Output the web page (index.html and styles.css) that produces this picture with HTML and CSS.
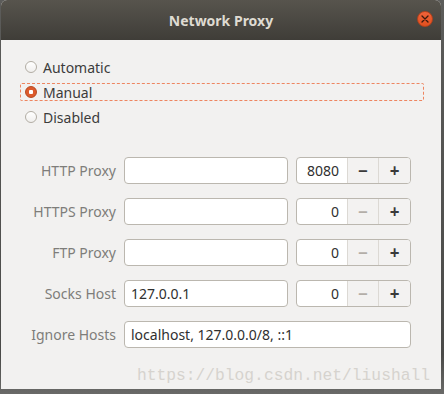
FILE: index.html
```html
<!DOCTYPE html>
<html>
<head>
<title>Network Proxy</title>
<link rel="stylesheet" href="styles.css">
</head>
<body>
    <div class="window">
        <div class="titlebar">
            <span class="title">Network Proxy</span>
            <span class="close">
                <svg width="8" height="8" viewBox="0 0 8 8"><path d="M1 1L7 7M7 1L1 7" stroke="#3a1a0e" stroke-width="1.3" stroke-linecap="round"/></svg>
            </span>
        </div>
        <div class="content">
            <div class="modes">
                <div class="mode"><span class="radio"></span>Automatic</div>
                <div class="mode focus"><span class="radio on"></span>Manual</div>
                <div class="mode"><span class="radio"></span>Disabled</div>
            </div>

            <div class="form">
                <label>HTTP Proxy</label>
                <div class="entry"></div>
                <div class="spin">
                    <span class="val">8080</span>
                    <span class="btn">&minus;</span>
                    <span class="btn">+</span>
                </div>

                <label>HTTPS Proxy</label>
                <div class="entry"></div>
                <div class="spin">
                    <span class="val">0</span>
                    <span class="btn off">&minus;</span>
                    <span class="btn">+</span>
                </div>

                <label>FTP Proxy</label>
                <div class="entry"></div>
                <div class="spin">
                    <span class="val">0</span>
                    <span class="btn off">&minus;</span>
                    <span class="btn">+</span>
                </div>

                <label>Socks Host</label>
                <div class="entry">127.0.0.1</div>
                <div class="spin">
                    <span class="val">0</span>
                    <span class="btn off">&minus;</span>
                    <span class="btn">+</span>
                </div>

                <label>Ignore Hosts</label>
                <div class="entry wide">localhost, 127.0.0.0/8, ::1</div>
            </div>

            <div class="mark">https://blog.csdn.net/liushall</div>
        </div>
    </div>
</body>
</html>
```

FILE: styles.css
```css
body {
    margin: 0;
    background: linear-gradient(#5c5c5a, #4a4a48 90%, #6a6a68);
    font: 14px "Noto Sans", sans-serif;
    height: 394px;
    overflow: hidden;
}
.window {
    margin-left: 1px;
    width: 440px;
    height: 389px;
    background-color: #f2f1f0;
    border-radius: 6px 6px 0 0;
    overflow: hidden;
}
.titlebar {
    height: 40px;
    background: linear-gradient(#57544d, #3f3d38);
    display: flex;
    align-items: center;
    justify-content: center;
    position: relative;
}
.title {
    color: #dfdbd2;
    font-weight: bold;
    font-size: 14px;
}
.close {
    position: absolute;
    right: 8px;
    top: 11px;
    width: 16px;
    height: 16px;
    box-sizing: border-box;
    border-radius: 50%;
    background: linear-gradient(#f0633a, #e0501f);
    border: 1px solid #b5421c;
    display: flex;
    align-items: center;
    justify-content: center;
}
.content {
    padding: 18px 17px 0 19px;
}
.modes {
    display: flex;
    flex-direction: column;
    gap: 7px;
}
.mode {
    height: 18px;
    box-sizing: border-box;
    border: 1px solid transparent;
    display: flex;
    align-items: center;
    gap: 6px;
    padding-left: 4px;
    color: #3c3c3c;
}
.mode.focus {
    border: 1px dashed #ee8560;
    border-radius: 2px;
}
.radio {
    width: 12px;
    height: 12px;
    box-sizing: border-box;
    border-radius: 50%;
    border: 1px solid #b2ada4;
    background: linear-gradient(#ffffff, #f0efed);
}
.radio.on {
    border-color: #b5471f;
    background: radial-gradient(circle, #ffffff 0 2px, #dc5a2c 2.5px);
}
.form {
    margin-top: 31px;
    display: grid;
    grid-template-columns: 96px 164px 115px;
    grid-auto-rows: 27px;
    column-gap: 8px;
    row-gap: 14px;
    align-items: center;
}
.form label {
    text-align: right;
    color: #7e7d7a;
}
.entry {
    height: 27px;
    box-sizing: border-box;
    border: 1px solid #bbb7af;
    border-radius: 4px;
    background: #ffffff;
    padding-left: 6px;
    display: flex;
    align-items: center;
    color: #2f2f2f;
}
.entry.wide {
    grid-column: 2 / 4;
}
.spin {
    height: 27px;
    box-sizing: border-box;
    border: 1px solid #bbb7af;
    border-radius: 4px;
    background: #ffffff;
    display: flex;
    overflow: hidden;
    color: #2f2f2f;
}
.spin .val {
    flex: 1;
    text-align: right;
    padding-right: 8px;
    line-height: 25px;
}
.spin .btn {
    width: 30px;
    border-left: 1px solid #dcd9d4;
    background: #f3f2f1;
    text-align: center;
    line-height: 25px;
    font-size: 17px;
    font-weight: bold;
    color: #3a3a3a;
}
.spin .btn:last-child {
    width: 31px;
}
.spin .btn.off {
    color: #b3aea8;
}
.mark {
    margin-top: 18px;
    margin-right: -6px;
    text-align: right;
    font: 16.3px "Liberation Mono", monospace;
    color: #d6d3ce;
}
```
